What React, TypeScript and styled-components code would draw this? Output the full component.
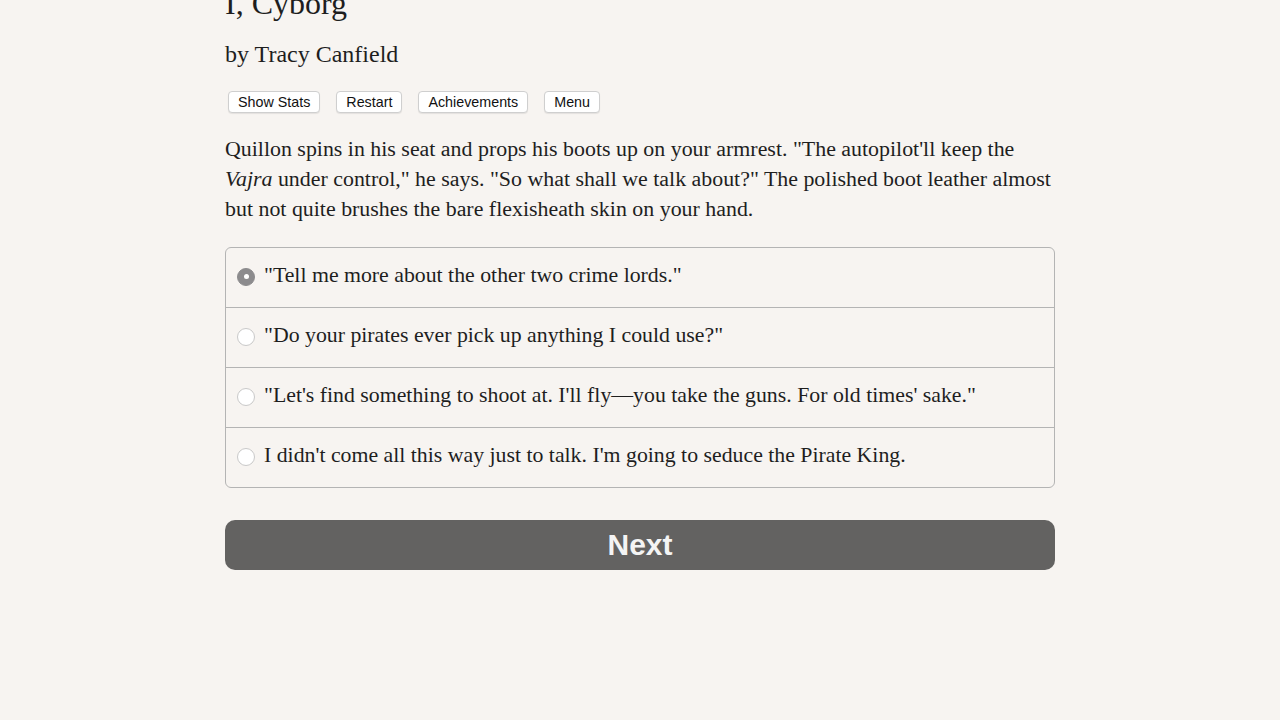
import styled, { createGlobalStyle } from "styled-components";

const GlobalStyle = createGlobalStyle`
  html, body {
    margin: 0;
    padding: 0;
    background: #f7f4f1;
  }
  body {
    font-family: "Liberation Serif", "Times New Roman", serif;
    color: #1e1e1e;
  }
`;

const Page = styled.div`
  width: 830px;
  margin: 0 auto;
  padding-bottom: 40px;
`;

const Title = styled.h1`
  margin: -17px 0 0 0;
  font-weight: normal;
  font-size: 32px;
  line-height: 40px;
`;

const Author = styled.h2`
  margin: 16px 0 0 0;
  font-weight: normal;
  font-size: 24px;
  line-height: 30px;
`;

const Toolbar = styled.div`
  display: flex;
  gap: 16px;
  margin: 22px 0 0 3px;
`;

const ToolButton = styled.button`
  font-family: "Liberation Sans", Arial, sans-serif;
  font-size: 14.3px;
  color: #111;
  background: #fff;
  border: 1px solid #cfcfcf;
  border-radius: 4px;
  height: 22px;
  padding: 0 9px;
  box-shadow: 0 1px 1px rgba(0, 0, 0, 0.08);
`;

const Paragraph = styled.p`
  margin: 21px 0 0 0;
  font-size: 21.9px;
  line-height: 30px;
`;

const Choices = styled.div`
  margin-top: 23px;
  border: 1px solid #b4b4b4;
  border-radius: 6px;
  overflow: hidden;
`;

const Choice = styled.label`
  display: flex;
  align-items: center;
  box-sizing: border-box;
  height: 59px;
  padding: 0 0 5px 11px;
  gap: 9px;
  font-size: 21.8px;
  & + & {
    box-sizing: content-box;
    border-top: 1px solid #b4b4b4;
    height: 54px;
  }
`;

const Radio = styled.span<{ $checked?: boolean }>`
  width: 18px;
  height: 18px;
  border-radius: 50%;
  box-sizing: border-box;
  flex: none;
  margin-top: 3px;
  background: ${({ $checked }) => ($checked ? "#8c8b8d" : "#fff")};
  border: 1px solid ${({ $checked }) => ($checked ? "#8c8b8d" : "#c9c9c9")};
  display: flex;
  align-items: center;
  justify-content: center;
  &::after {
    content: "";
    display: ${({ $checked }) => ($checked ? "block" : "none")};
    width: 5px;
    height: 5px;
    border-radius: 50%;
    background: #fff;
  }
`;

const NextButton = styled.button`
  display: block;
  width: 100%;
  margin-top: 32px;
  height: 50px;
  border: none;
  border-radius: 10px;
  background: #636261;
  color: #f4f4f4;
  font-family: "Liberation Sans", Arial, sans-serif;
  font-weight: bold;
  font-size: 30px;
`;

const choices = [
  "\"Tell me more about the other two crime lords.\"",
  "\"Do your pirates ever pick up anything I could use?\"",
  "\"Let's find something to shoot at. I'll fly\u2014you take the guns. For old times' sake.\"",
  "I didn't come all this way just to talk. I'm going to seduce the Pirate King.",
];

export default function App() {
  return (
    <>
      <GlobalStyle />
      <Page>
        <Title>I, Cyborg</Title>
        <Author>by Tracy Canfield</Author>
        <Toolbar>
          <ToolButton>Show Stats</ToolButton>
          <ToolButton>Restart</ToolButton>
          <ToolButton>Achievements</ToolButton>
          <ToolButton>Menu</ToolButton>
        </Toolbar>
        <Paragraph>
          Quillon spins in his seat and props his boots up on your armrest. "The autopilot'll keep the{" "}
          <i>Vajra</i> under control," he says. "So what shall we talk about?" The polished boot leather almost
          but not quite brushes the bare flexisheath skin on your hand.
        </Paragraph>
        <Choices>
          {choices.map((c, i) => (
            <Choice key={i}>
              <Radio $checked={i === 0} />
              {c}
            </Choice>
          ))}
        </Choices>
        <NextButton>Next</NextButton>
      </Page>
    </>
  );
}
